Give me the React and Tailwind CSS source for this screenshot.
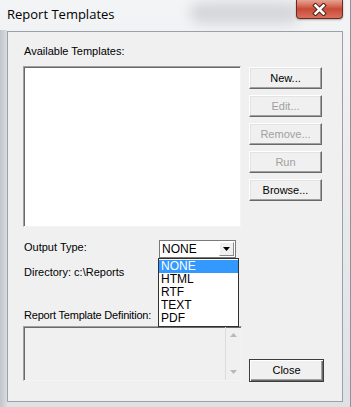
import React from "react";

const sys = { fontFamily: '"Liberation Sans", Arial, sans-serif' };

function Btn({ children, disabled }) {
  return (
    <div
      className="w-[73px] h-[22px] flex items-center justify-center text-[11px] bg-[#f0f0f0] border border-t-[#ffffff] border-l-[#ffffff] border-r-[#696969] border-b-[#696969] shadow-[inset_-1px_-1px_0_#a0a0a0,inset_1px_1px_0_#e3e3e3]"
      style={sys}
    >
      <span className={disabled ? "text-[#a0a0a0]" : "text-black"}>{children}</span>
    </div>
  );
}

export default function App() {
  return (
    <div className="w-[351px] h-[407px] relative overflow-hidden bg-gradient-to-b from-[#f3f4f5] via-[#e8eaec] to-[#dfe2e5] border-r border-[#8e949a]">
      {/* blurred background hints */}
      <div className="absolute left-[190px] top-[2px] w-[110px] h-[22px] rounded-full bg-[#c9ccd0] blur-[6px] opacity-70" />
      <div className="absolute left-0 top-[30px] w-[7px] h-[377px] bg-gradient-to-r from-[#c2c5c9] to-[#dadde0]" />

      {/* title bar */}
      <div className="relative h-[31px] flex items-start">
        <div
          className="pl-[7px] pt-[5px] text-[13px] text-black"
          style={{ fontFamily: '"Open Sans", "Noto Sans", sans-serif' }}
        >
          Report Templates
        </div>
        <div className="absolute left-[296px] top-0 w-[47px] h-[19px] rounded-b-[4px] border border-t-0 border-[#6b2a22] bg-gradient-to-b from-[#e6a394] via-[#c94b37] to-[#d8705c] flex items-center justify-center shadow-[0_1px_2px_rgba(0,0,0,0.3)]">
          <svg width="15" height="13" viewBox="0 0 15 13">
            <path d="M3.5 2.5 L11.5 10.5 M11.5 2.5 L3.5 10.5" stroke="#4a1a14" strokeWidth="4.5" strokeLinecap="square" />
            <path d="M3.5 2.5 L11.5 10.5 M11.5 2.5 L3.5 10.5" stroke="#ffffff" strokeWidth="2.6" strokeLinecap="square" />
          </svg>
        </div>
      </div>

      {/* client */}
      <div className="relative mx-[7px] h-[371px] border border-[#9ba1a8] bg-[#f0f0f0] text-[11px] text-black" style={sys}>
        <div className="pl-[15px] pt-[13px]">
          <div className="h-[13px] leading-[13px] ml-[1px]">Available Templates:</div>
          <div className="flex mt-[8px]">
            <div className="w-[218px] h-[161px] bg-white border border-t-[#a0a0a0] border-l-[#a0a0a0] border-r-[#f4f4f4] border-b-[#f4f4f4] shadow-[inset_1px_1px_0_#696969]" />
            <div className="ml-[8px] mt-[1px] flex flex-col gap-[6px]">
              <Btn>New...</Btn>
              <Btn disabled>Edit...</Btn>
              <Btn disabled>Remove...</Btn>
              <Btn disabled>Run</Btn>
              <Btn>Browse...</Btn>
            </div>
          </div>

          <div className="flex mt-[13px]">
            <div className="w-[135px] ml-[1px] pt-[1px] h-[13px] leading-[13px]">Output Type:</div>
            <div className="relative w-[77px] h-[18px] bg-white border border-[#7a7a7a] flex items-center">
              <span className="pl-[2px] text-[12px] leading-[14px]">NONE</span>
              <div className="absolute right-[1px] top-[1px] w-[15px] h-[14px] bg-[#f0f0f0] border border-t-white border-l-white border-r-[#8a8a8a] border-b-[#8a8a8a] flex items-center justify-center">
                <svg width="7" height="4" viewBox="0 0 7 4">
                  <path d="M0 0 H7 L3.5 4 Z" fill="#000" />
                </svg>
              </div>
              <div className="absolute left-[-2px] top-[17px] w-[81px] h-[69px] bg-white border border-[#303030] z-10 pt-[1px] text-[12px]">
                <div className="h-[13px] leading-[13px] bg-[#3399ff] text-white pl-[2px]">NONE</div>
                <div className="h-[13px] leading-[13px] pl-[2px]">HTML</div>
                <div className="h-[13px] leading-[13px] pl-[2px]">RTF</div>
                <div className="h-[13px] leading-[13px] pl-[2px]">TEXT</div>
                <div className="h-[13px] leading-[13px] pl-[2px]">PDF</div>
              </div>
            </div>
          </div>

          <div className="mt-[8px] ml-[1px] h-[13px] leading-[13px]">Directory: c:\Reports</div>
          <div className="mt-[30px] ml-[1px] h-[13px] leading-[13px] tracking-[-0.2px]">Report Template Definition:</div>

          <div className="flex mt-[4px]">
            <div className="w-[219px] h-[55px] bg-[#f0f0f0] border border-t-[#a0a0a0] border-l-[#a0a0a0] border-r-[#f4f4f4] border-b-[#f4f4f4] shadow-[inset_1px_1px_0_#696969] flex justify-end">
              <div className="w-[16px] h-full border-l border-[#dcdcdc] flex flex-col items-center justify-between py-[6px]">
                <svg width="7" height="4" viewBox="0 0 7 4">
                  <path d="M0 4 H7 L3.5 0 Z" fill="#b8b8b8" />
                </svg>
                <svg width="7" height="4" viewBox="0 0 7 4">
                  <path d="M0 0 H7 L3.5 4 Z" fill="#b8b8b8" />
                </svg>
              </div>
            </div>
            <div className="ml-[7px] mt-[33px] w-[75px] h-[23px] border border-[#3c3c3c] bg-[#f0f0f0] flex items-center justify-center shadow-[inset_1px_1px_0_#ffffff,inset_-1px_-1px_0_#696969,inset_-2px_-2px_0_#a0a0a0]">
              Close
            </div>
          </div>
        </div>
      </div>
    </div>
  );
}
